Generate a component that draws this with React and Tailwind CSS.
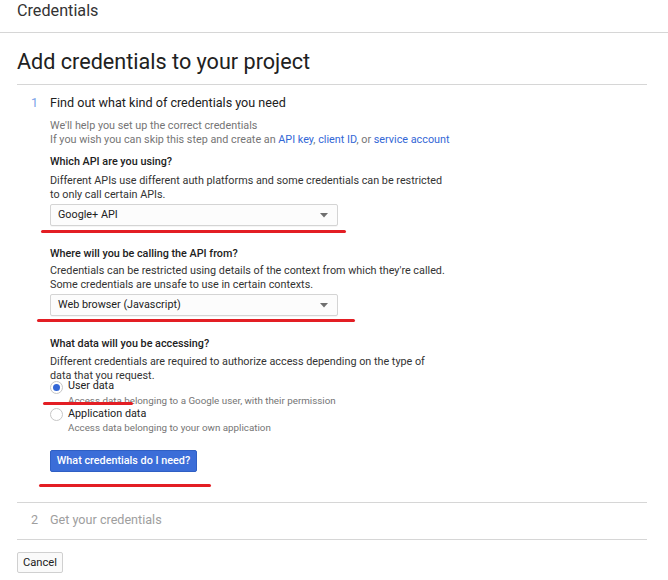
import React from "react";

const RED = "bg-[#e31e24]";

function Select({ label }) {
  return (
    <div className="mt-[2px] flex h-[22px] w-[288px] items-center justify-between rounded-[2px] border border-[#d4d4d4] bg-[#fcfcfc] pl-[7px] pr-[9px] text-[10.8px] leading-[14px] text-[#212121] shadow-[0_1px_0_rgba(0,0,0,0.04)]">
      <span>{label}</span>
      <svg width="8" height="5" viewBox="0 0 8 5" className="block">
        <path d="M0 0 L8 0 L4 4.5 Z" fill="#6f6f6f" />
      </svg>
    </div>
  );
}

function Radio({ checked }) {
  return (
    <span className="flex h-[13px] w-[13px] shrink-0 items-center justify-center rounded-full border border-[#c6c6c6] bg-white">
      {checked && <span className="h-[7px] w-[7px] rounded-full bg-[#3367d6]" />}
    </span>
  );
}

export default function App() {
  return (
    <div
      className="min-h-[580px] w-[668px] bg-white text-[#212121]"
      style={{ fontFamily: "Roboto, 'Liberation Sans', Arial, sans-serif" }}
    >
      <div className="h-[33px] border-b border-[#d6d6d6] px-[17px] text-[16.2px] leading-[22px] text-[#333]">
        Credentials
      </div>

      <div className="mx-[17px] w-[630px]">
        <div className="h-[52px] border-b border-[#d6d6d6] pt-[14px] text-[21.6px] leading-[30px] text-[#212121]">
          Add credentials to your project
        </div>

        {/* Step 1 */}
        <div className="flex pt-[8px] pb-[15px]">
          <div className="w-[33px] pl-[14px] text-[12.6px] leading-[20px] text-[#7ba3e8]">1</div>
          <div className="flex-1">
            <div className="text-[12.6px] leading-[20px] text-[#212121]">
              Find out what kind of credentials you need
            </div>
            <div className="mt-[6px] text-[10.8px] leading-[14px] text-[#757575]">
              <div>We'll help you set up the correct credentials</div>
              <div>
                If you wish you can skip this step and create an{" "}
                <span className="text-[#3367d6]">API key</span>,{" "}
                <span className="text-[#3367d6]">client ID</span>, or{" "}
                <span className="text-[#3367d6]">service account</span>
              </div>
            </div>

            <div className="mt-[8px] text-[10.8px] font-medium leading-[14px] text-[#212121]">
              Which API are you using?
            </div>
            <div className="mt-[5px] whitespace-nowrap text-[10.8px] leading-[14px] text-[#333]">
              Different APIs use different auth platforms and some credentials can be restricted
              <br />
              to only call certain APIs.
            </div>
            <Select label="Google+ API" />
            <div className={`ml-[-9px] mt-[4px] h-[3px] w-[305px] rounded-full ${RED}`} />

            <div className="mt-[14px] text-[10.8px] font-medium leading-[14px] text-[#212121]">
              Where will you be calling the API from?
            </div>
            <div className="mt-[3px] whitespace-nowrap text-[10.8px] leading-[14px] text-[#333]">
              Credentials can be restricted using details of the context from which they're called.
              <br />
              Some credentials are unsafe to use in certain contexts.
            </div>
            <Select label="Web browser (Javascript)" />
            <div className={`ml-[-13px] mt-[3px] h-[3px] w-[318px] rounded-full ${RED}`} />

            <div className="mt-[15px] text-[10.8px] font-medium leading-[14px] text-[#212121]">
              What data will you be accessing?
            </div>
            <div className="mt-[4px] whitespace-nowrap text-[10.8px] text-[#333]">
              <div className="leading-[14px]">
                Different credentials are required to authorize access depending on the type of
              </div>
              <div className="mt-[2px] leading-[10px]">data that you request.</div>
            </div>

            <div className="relative">
              <div className="flex items-start gap-[5px]">
                <Radio checked />
                <div>
                  <div className="text-[10.8px] leading-[10px] text-[#212121]">User data</div>
                  <div className="mt-[3px] text-[9.8px] leading-[14px] text-[#757575]">
                    Access data belonging to a Google user, with their permission
                  </div>
                </div>
              </div>
              <div className={`absolute left-[-7px] top-[21px] h-[3px] w-[90px] rounded-full ${RED}`} />
              <div className="mt-[-1px] flex items-start gap-[5px]">
                <span className="mt-[1px]"><Radio /></span>
                <div>
                  <div className="text-[10.8px] leading-[14px] text-[#212121]">Application data</div>
                  <div className="text-[9.8px] leading-[14px] text-[#757575]">
                    Access data belonging to your own application
                  </div>
                </div>
              </div>
            </div>

            <button className="mt-[15px] flex h-[22px] w-[147px] items-center justify-center whitespace-nowrap rounded-[2px] border border-[#2f5fc4] bg-[#3b6dd8] text-[10.8px] font-medium leading-[14px] text-white">
              What credentials do I need?
            </button>
            <div className={`ml-[-11px] mt-[12px] h-[3px] w-[172px] rounded-full ${RED}`} />
          </div>
        </div>

        {/* Step 2 */}
        <div className="flex border-y border-[#d6d6d6] pt-[7px] pb-[9px]">
          <div className="w-[33px] pl-[14px] text-[12.6px] leading-[20px] text-[#9e9e9e]">2</div>
          <div className="text-[12.6px] leading-[20px] text-[#9e9e9e]">Get your credentials</div>
        </div>

        <button className="mt-[12px] h-[21px] w-[46px] rounded-[2px] border border-[#d0d0d0] bg-[#fafafa] text-[11.2px] leading-[14px] text-[#212121]">
          Cancel
        </button>
      </div>
    </div>
  );
}
